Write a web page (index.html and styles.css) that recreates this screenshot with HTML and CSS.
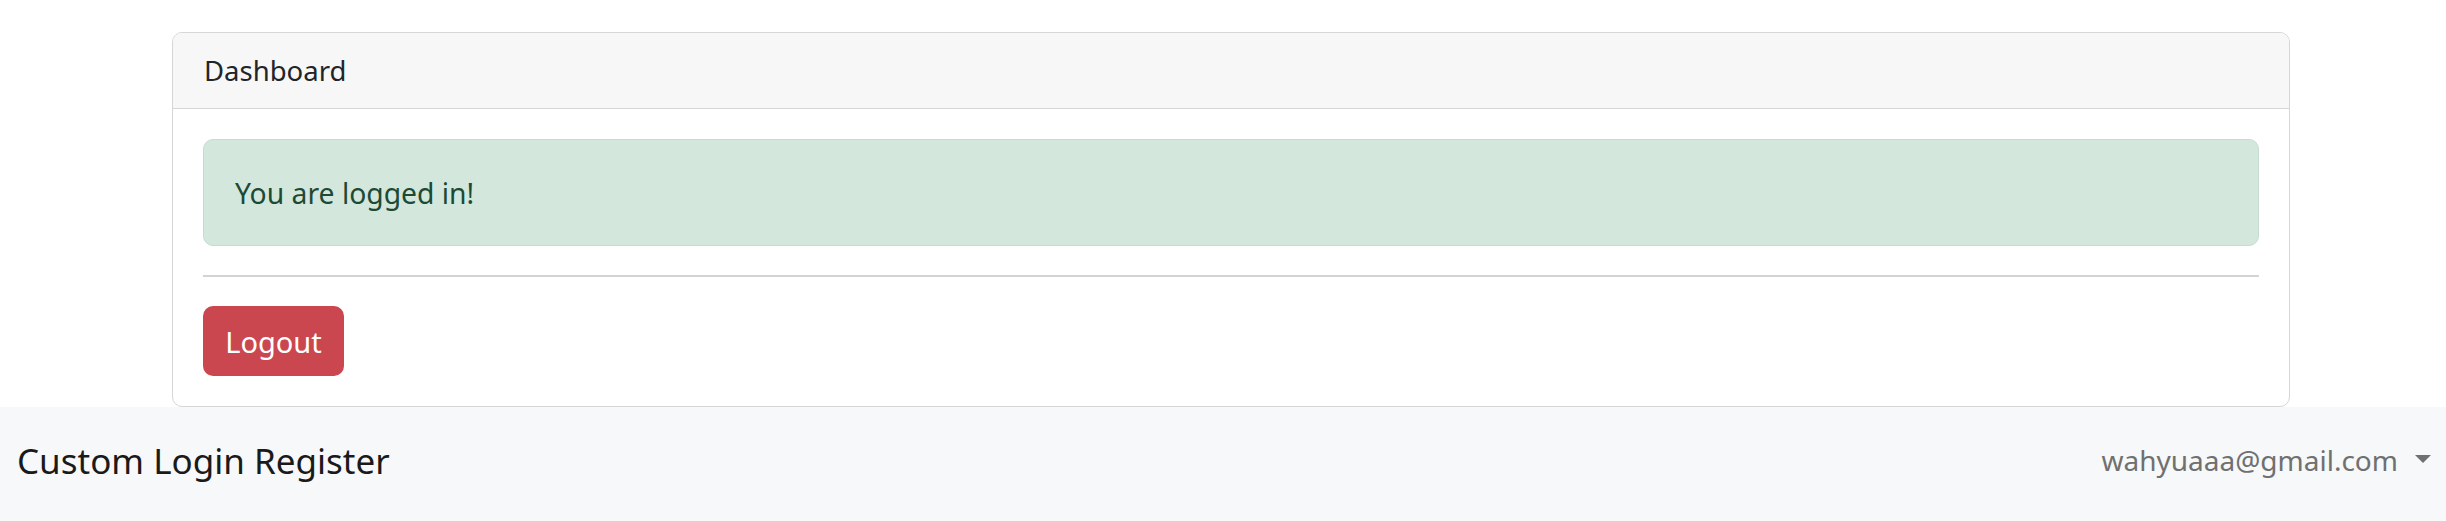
FILE: index.html
```html
<!DOCTYPE html>
<html lang="en">
<head>
<meta charset="utf-8">
<title>Dashboard</title>
<link rel="stylesheet" href="styles.css">
</head>
<body>
<main class="page">
  <section class="card">
    <header class="card-header">Dashboard</header>
    <div class="card-body">
      <div class="alert">You are logged in!</div>
      <hr class="divider">
      <button class="btn-logout" type="button">Logout</button>
    </div>
  </section>
</main>
<nav class="navbar">
  <span class="brand">Custom Login Register</span>
  <div class="user-menu">
    <span class="user-email">wahyuaaa@gmail.com</span>
    <span class="caret"></span>
  </div>
</nav>
</body>
</html>
```
FILE: styles.css
```css
html, body {
  margin: 0;
  padding: 0;
  background: #ffffff;
}
body {
  font-family: "Noto Sans", "Open Sans", sans-serif;
  font-size: 25px;
  color: #212529;
  width: 2446px;
  height: 521px;
  overflow: hidden;
}
.page {
  padding-top: 32px;
}
.card {
  margin: 0 156px 0 172px;
  border: 1px solid #d6d6d6;
  border-radius: 10px;
  overflow: hidden;
}
.card-header {
  height: 76px;
  box-sizing: border-box;
  background: #f7f7f7;
  border-bottom: 1px solid #d6d6d6;
  padding: 0 31px;
  display: flex;
  align-items: center;
  font-size: 27.5px;
  color: #212529;
}
.card-body {
  padding: 30px 30px 30px 30px;
}
.alert {
  height: 107px;
  box-sizing: border-box;
  background: #d4e7dc;
  border: 1px solid #c4dccf;
  border-radius: 10px;
  padding: 0 31px;
  display: flex;
  align-items: center;
  color: #1d4a35;
  font-size: 28.3px;
}
.divider {
  margin: 29px 0 0 0;
  border: 0;
  border-top: 2px solid #d3d3d3;
  height: 0;
}
.btn-logout {
  display: flex;
  align-items: center;
  justify-content: center;
  margin-top: 29px;
  width: 141px;
  height: 70px;
  border: 0;
  border-radius: 10px;
  background: #cb4750;
  color: #ffffff;
  font-family: inherit;
  font-size: 29px;
  padding: 0;
}
.navbar {
  height: 114px;
  background: #f6f8f9;
  display: flex;
  align-items: center;
  justify-content: space-between;
  padding: 0 15px 8px 17px;
  box-sizing: border-box;
}
.brand {
  font-size: 35px;
  color: #1a1a1a;
}
.user-menu {
  display: flex;
  align-items: center;
  gap: 17px;
}
.user-email {
  font-size: 28px;
  color: #707070;
}
.caret {
  width: 0;
  height: 0;
  border-left: 8px solid transparent;
  border-right: 8px solid transparent;
  border-top: 8px solid #707070;
  margin-top: -2px;
}
```
